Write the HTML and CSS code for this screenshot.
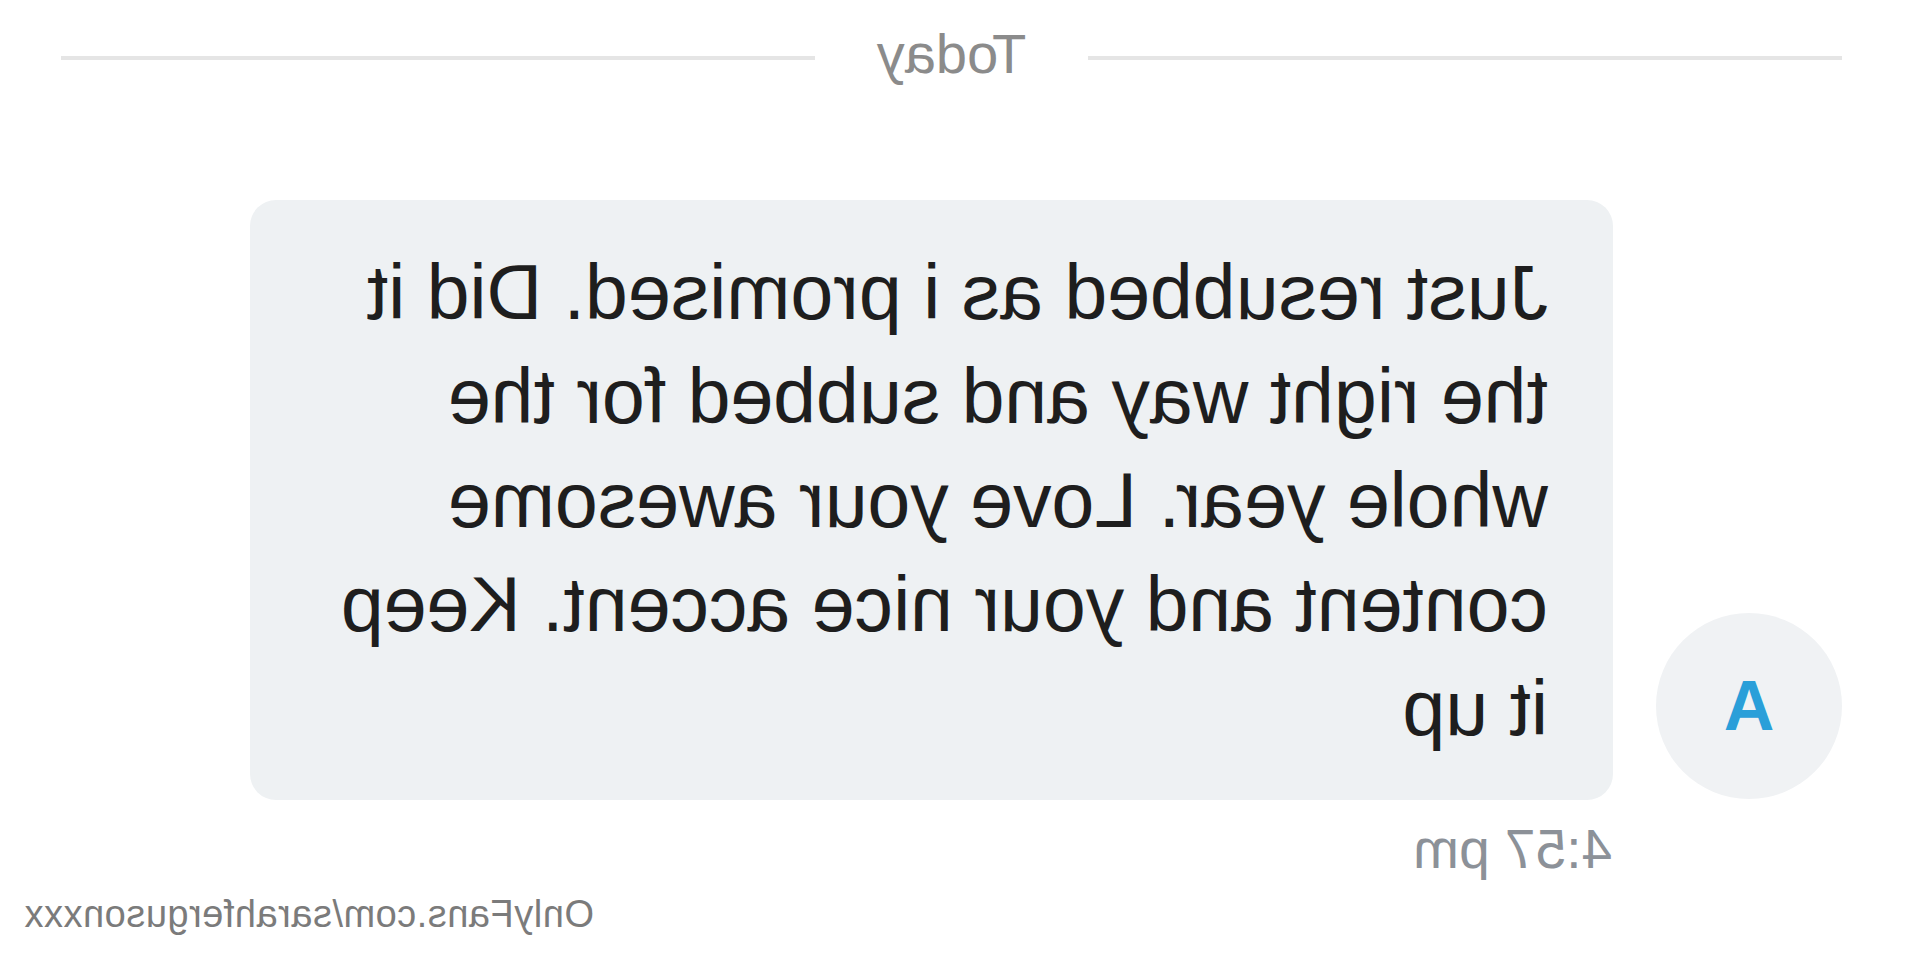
FILE: index.html
```html
<!DOCTYPE html>
<html lang="en">
<head>
<meta charset="utf-8">
<title>Chat</title>
<link rel="stylesheet" href="styles.css">
</head>
<body>
<div class="screen">
  <div class="divider">
    <span class="divider-line"></span>
    <span class="divider-label">Today</span>
    <span class="divider-line"></span>
  </div>
  <div class="message-row">
    <div class="avatar">A</div>
    <div class="bubble">Just resubbed as i promised. Did it the right way and subbed for the whole year. Love your awesome content and your nice accent. Keep it up</div>
  </div>
  <div class="msg-time">4:57 pm</div>
  <div class="watermark">OnlyFans.com/sarahfergusonxxx</div>
</div>
</body>
</html>
```
FILE: styles.css
```css
html, body {
  margin: 0;
  padding: 0;
  background: #ffffff;
  overflow: hidden;
}

.screen {
  position: relative;
  width: 1919px;
  height: 960px;
  transform: scaleX(-1);
  font-family: "Liberation Sans", Arial, sans-serif;
  box-sizing: border-box;
  padding-top: 22px;
}

.divider {
  display: flex;
  align-items: center;
  gap: 62px;
  padding: 0 61px 0 77px;
  height: 64px;
}

.divider-line {
  flex: 1;
  height: 4px;
  margin-top: 7px;
  background: #e5e5e5;
}

.divider-label {
  font-size: 56px;
  color: #8b8b8b;
  line-height: 64px;
}

.message-row {
  display: flex;
  align-items: flex-end;
  gap: 43px;
  padding-left: 77px;
  margin-top: 114px;
}

.avatar {
  width: 186px;
  height: 186px;
  flex: 0 0 186px;
  border-radius: 50%;
  background: #f0f2f4;
  color: #2a9fd9;
  font-weight: 700;
  font-size: 70px;
  display: flex;
  align-items: center;
  justify-content: center;
  margin-bottom: 1px;
}

.bubble {
  width: 1363px;
  box-sizing: border-box;
  padding: 40px 65px;
  background: #eef1f3;
  border-radius: 26px;
  font-size: 77px;
  line-height: 104px;
  color: #1e1e1e;
}

.msg-time {
  margin-top: 17px;
  padding-left: 307px;
  font-size: 55px;
  color: #8c9198;
}

.watermark {
  position: absolute;
  right: 24px;
  top: 893px;
  font-size: 38px;
  color: #7b7b7b;
  letter-spacing: 0.5px;
}
```
